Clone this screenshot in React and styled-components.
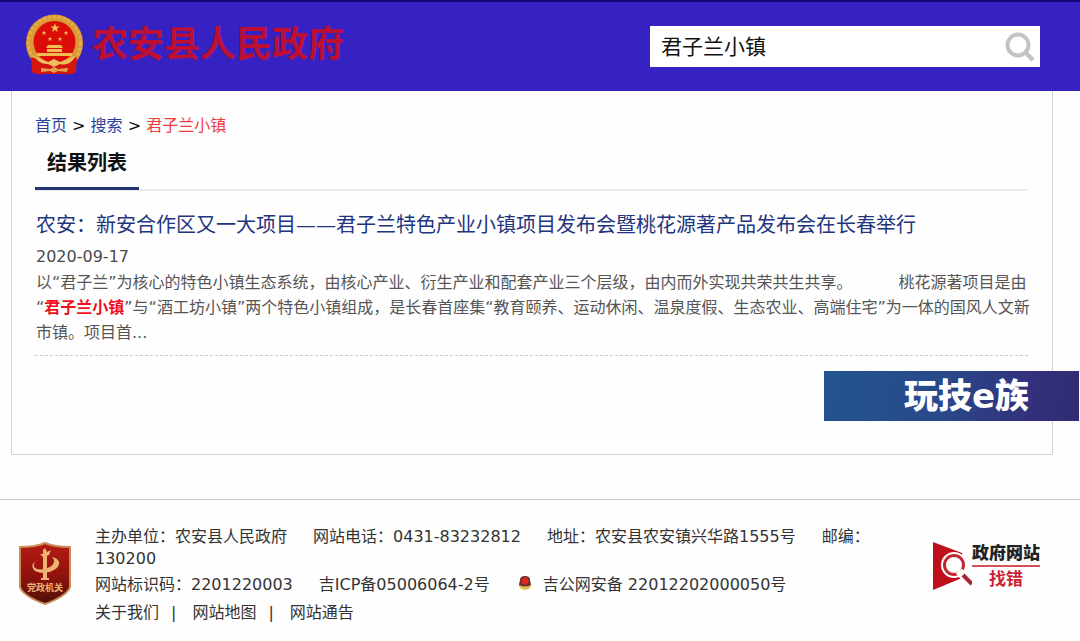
import { useState } from "react";
import styled, { createGlobalStyle } from "styled-components";

const GlobalStyle = createGlobalStyle`
  * {
    box-sizing: border-box;
  }
  body {
    margin: 0;
    background: #fefefe;
    color: #333;
    font-family: "DejaVu Sans", "Noto Sans CJK SC", sans-serif;
    font-size: 16px;
  }
  h1, h2, p {
    margin: 0;
    padding: 0;
  }
  a {
    color: inherit;
    text-decoration: none;
  }
`;

const Header = styled.header`
  display: flex;
  align-items: center;
  justify-content: space-between;
  height: 91px;
  padding: 0 40px 0 24px;
  border-top: 2px solid #15077a;
  background: #3621c2;
`;

const Brand = styled.a`
  display: flex;
  align-items: center;
  gap: 8px;
  padding-bottom: 4px;
  color: #bd0f33;
  font-size: 36px;
  font-weight: 700;
  line-height: 60px;
`;

const SearchForm = styled.form`
  display: flex;
  align-items: center;
  width: 36%;
  min-width: 390px;
  max-width: 391px;
  height: 41px;
  background: #fff;

  input {
    flex: 1;
    min-width: 0;
    height: 100%;
    padding: 0 11px 4px;
    border: 0;
    outline: 0;
    background: transparent;
    color: #111;
    font-family: inherit;
    font-size: 21px;
  }

  button {
    display: flex;
    padding: 0 4px;
    border: 0;
    background: transparent;
    cursor: pointer;
  }
`;

const Main = styled.main`
  position: relative;
  padding: 0 27px 0 11px;
`;

const Card = styled.section`
  min-height: 364px;
  padding: 23px 24px 0 23px;
  border: 1px solid #cfcfd6;
  border-top: 0;
`;

const Breadcrumb = styled.nav`
  line-height: 24px;
  color: #111;

  a {
    color: #2b3f94;
  }
  span {
    color: #f03a40;
  }
`;

const Tabs = styled.div`
  display: flex;
  border-bottom: 2px solid #ebebee;

  h2 {
    margin-bottom: -1px;
    padding: 10px 12px 9px;
    border-bottom: 3px solid #243670;
    color: #111;
    font-size: 20px;
    line-height: 30px;
  }
`;

const Result = styled.article`
  padding: 20px 0 10px 1px;
  border-bottom: 1px dashed #ccc;
`;

const ResultTitle = styled.h2`
  color: #22357f;
  font-size: 20px;
  font-weight: 400;
  line-height: 28px;
`;

const ResultDate = styled.time`
  display: block;
  padding-top: 5px;
  color: #4a4a4a;
  line-height: 26px;
`;

const Summary = styled.p`
  margin-right: -4px;
  color: #555;
  line-height: 25px;

  em {
    color: #f3101c;
    font-style: normal;
    font-weight: 700;
  }
`;

const Banner = styled.a`
  position: absolute;
  top: 280px;
  right: 1px;
  display: flex;
  justify-content: flex-end;
  width: 255px;
  padding-right: 50px;
  background: linear-gradient(100deg, #225590 0%, #28498a 45%, #33307c 80%, #302b72 100%);
  color: #fff;
  font-size: 34px;
  font-weight: 900;
  line-height: 50px;
`;

const Footer = styled.footer`
  display: flex;
  align-items: flex-start;
  margin-top: 44px;
  padding: 26px 40px 16px 19px;
  border-top: 1px solid #cbcbd6;
`;

const Badge = styled.a`
  display: flex;
  margin: 16px 24px 0 0;
`;

const FooterInfo = styled.div`
  flex: 1;
  display: flex;
  flex-direction: column;
  gap: 4px;
  line-height: 22px;
`;

const Item = styled.span`
  margin-right: 26px;

  svg {
    margin: 0 11px 0 2px;
    vertical-align: 0;
  }
`;

const Links = styled.p`
  padding-top: 2px;

  a + a::before {
    content: "|";
    margin: 0 16px 0 12px;
  }
`;

const ReportLink = styled.a`
  display: flex;
  align-items: center;
  margin: 15px 0 0 48px;
`;

const ReportText = styled.span`
  display: flex;
  flex-direction: column;
  align-items: center;
  color: #cb1f33;
  font-size: 17px;
  font-weight: 700;
  line-height: 24px;

  strong {
    border-bottom: 2px solid #d5505c;
    color: #222;
  }
`;

const star = "M0 -5 L1.2 -1.6 4.8 -1.6 1.9 .6 3 4 0 2 -3 4 -1.9 .6 -4.8 -1.6 -1.2 -1.6Z";

function Emblem() {
  return (
    <svg width="60" height="62" viewBox="0 0 60 62" aria-hidden="true">
      <path d="M9 40 L8 57 Q13 61 18 60 L42 60 Q48 61 52 57 L51 40Z" fill="#d4160f" />
      <circle cx="30.500" cy="29" r="28.500" fill="#d99a35" />
      <circle cx="30.500" cy="29" r="26" fill="none" stroke="#e5ae48" strokeWidth="3" strokeDasharray="3 2" />
      <circle cx="30.500" cy="28" r="21" fill="#dc0d08" />
      <g fill="#f2bd50">
        <path d={star} transform="translate(31 14)" />
        <path d={star} transform="translate(20 19) scale(.5)" />
        <path d={star} transform="translate(42 19) scale(.5)" />
        <path d={star} transform="translate(26 25) scale(.5)" />
        <path d={star} transform="translate(36 25) scale(.5)" />
        <path d="M24 31h13l2 3H22zM23 35h15v3H23zM13 39h35v3H13z" />
      </g>
      <path d="M7 43 Q16 46 24 49 L30 46 L36 49 Q45 46 53 43 L52 58 Q48 61 42 60 L18 60 Q12 61 8 58Z" fill="#d4160f" />
      <path d="M10 42 Q17 45 24 48 L30 45 L36 48 Q44 45 51 42 L49 46 Q43 52 36 50 L30 53 L24 50 Q16 51 10 42Z" fill="#edbd60" />
      <path d="M17 54 L26 55 30 53 34 55 44 54 43 58 34 57 30 59 26 57 17 58Z" fill="#e0a44b" />
    </svg>
  );
}

function SearchIcon() {
  return (
    <svg width="32" height="32" viewBox="0 0 32 32" fill="none" stroke="#c3c3c6" aria-hidden="true">
      <circle cx="14" cy="14" r="10.500" strokeWidth="4" />
      <path d="M22 22 L29 29" strokeWidth="4.500" />
    </svg>
  );
}

function PartyBadge() {
  return (
    <svg width="52" height="63" viewBox="0 0 52 63" role="img" aria-label="党政机关">
      <defs>
        <linearGradient id="shield" x1="0" y1="0" x2="0" y2="1">
          <stop offset="0" stopColor="#b51c12" />
          <stop offset=".55" stopColor="#8f120d" />
          <stop offset="1" stopColor="#4f1009" />
        </linearGradient>
      </defs>
      <path
        d="M26 1 Q35 5 51 5 V45 Q48 54 26 62 Q4 54 1 45 V5 Q17 5 26 1Z"
        fill="url(#shield)"
        stroke="#c98b58"
        strokeWidth="2"
      />
      <g fill="#eeb473">
        <path d="M24 8 L26 6 28 10 32 8 30 13 28 14 V36 H30 V38 H22 V36 H24 V15 L21 12 24 12Z" />
        <path d="M24 16 Q13 19 15 25 Q20 30 31 25 Q38 20 33 15 Q44 18 38 26 Q27 34 16 29 Q8 21 24 16Z" />
        <text x="26" y="49" fontSize="9" fontWeight="700" textAnchor="middle">
          党政机关
        </text>
      </g>
    </svg>
  );
}

function PoliceIcon() {
  return (
    <svg width="14" height="14" viewBox="0 0 14 14" aria-hidden="true">
      <path d="M1 7 Q0 13 7 14 Q14 13 13 7Z" fill="#e8bf55" />
      <path d="M7 0 Q12 0 12 4 L13 9 Q7 12 1 9 L2 4 Q2 0 7 0Z" fill="#6d3030" />
      <circle cx="7" cy="5" r="3.500" fill="#d82b1d" />
    </svg>
  );
}

function ReportIcon() {
  return (
    <svg width="41" height="50" viewBox="0 0 41 50" aria-hidden="true">
      <path d="M2 1 L31 12 V37 L2 49Z" fill="#bd101c" />
      <circle cx="23" cy="24" r="13" fill="#fff" />
      <circle cx="23" cy="24" r="9.500" fill="#fff" stroke="#c22630" strokeWidth="3" />
      <path d="M28 30 L34 37" stroke="#fff" strokeWidth="8" />
      <path d="M32 34 L41 43" stroke="#a92532" strokeWidth="4" />
    </svg>
  );
}

export default function App() {
  const [keyword, setKeyword] = useState("君子兰小镇");

  return (
    <>
      <GlobalStyle />
      <Header>
        <Brand href="#">
          <Emblem />
          农安县人民政府
        </Brand>
        <SearchForm role="search" onSubmit={(e) => e.preventDefault()}>
          <input
            type="text"
            aria-label="搜索"
            value={keyword}
            onChange={(e) => setKeyword(e.target.value)}
          />
          <button type="submit" aria-label="搜索">
            <SearchIcon />
          </button>
        </SearchForm>
      </Header>

      <Main>
        <Card>
          <Breadcrumb>
            <a href="#">首页</a> &gt; <a href="#">搜索</a> &gt; <span>君子兰小镇</span>
          </Breadcrumb>
          <Tabs>
            <h2>结果列表</h2>
          </Tabs>
          <Result>
            <ResultTitle>
              <a href="#">
                农安：新安合作区又一大项目——君子兰特色产业小镇项目发布会暨桃花源著产品发布会在长春举行
              </a>
            </ResultTitle>
            <ResultDate dateTime="2020-09-17">2020-09-17</ResultDate>
            <Summary>
              以“君子兰”为核心的特色小镇生态系统，由核心产业、衍生产业和配套产业三个层级，由内而外实现共荣共生共享。
              {"\u00a0".repeat(9)}
              桃花源著项目是由
              <wbr />“<em>君子兰小镇</em>”与“酒工坊小镇”两个特色小镇组成，是长春首座集“教育颐养、运动休闲、温泉度假、生态农业、高端住宅”为一体的国风人文新市镇。项目首...
            </Summary>
          </Result>
        </Card>
        <Banner href="#">玩技e族</Banner>
      </Main>

      <Footer>
        <Badge href="#">
          <PartyBadge />
        </Badge>
        <FooterInfo>
          <p>
            <Item>主办单位：农安县人民政府</Item>
            <Item>网站电话：0431-83232812</Item>
            <Item>地址：农安县农安镇兴华路1555号</Item>
            <span>邮编：</span>
            <wbr />
            <span>130200</span>
          </p>
          <p>
            <Item>网站标识码：2201220003</Item>
            <Item>吉ICP备05006064-2号</Item>
            <Item>
              <PoliceIcon />
              吉公网安备 22012202000050号
            </Item>
          </p>
          <Links>
            <a href="#">关于我们</a>
            <a href="#">网站地图</a>
            <a href="#">网站通告</a>
          </Links>
        </FooterInfo>
        <ReportLink href="#">
          <ReportIcon />
          <ReportText>
            <strong>政府网站</strong>
            <span>找错</span>
          </ReportText>
        </ReportLink>
      </Footer>
    </>
  );
}
